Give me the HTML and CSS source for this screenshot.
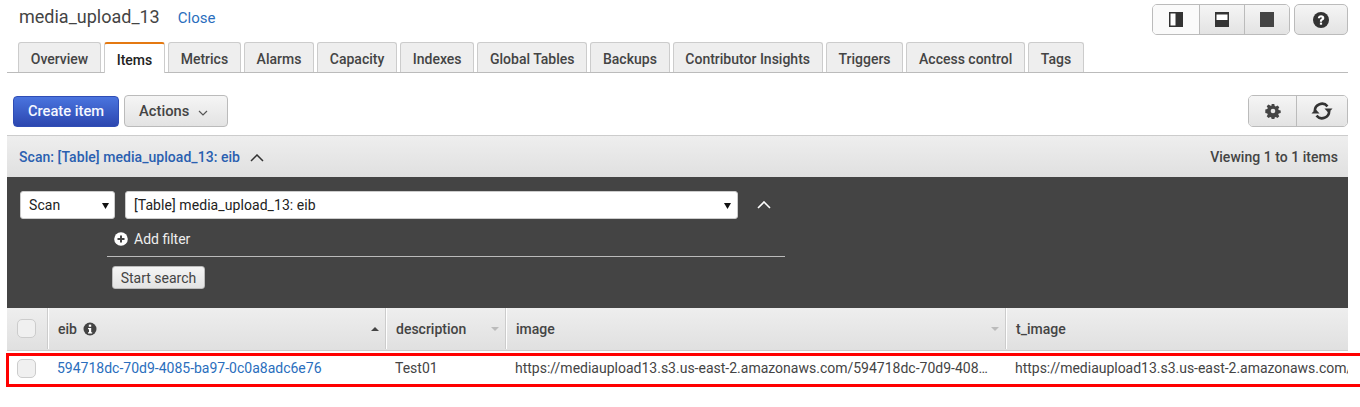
FILE: index.html
```html
<!DOCTYPE html>
<html lang="en">
<head>
<meta charset="utf-8">
<title>media_upload_13</title>
<link rel="stylesheet" href="styles.css">
</head>
<body>
<div class="page">
  <header class="title-row">
    <div class="title-left">
      <h1 class="title">media_upload_13</h1>
      <a class="close-link">Close</a>
    </div>
    <div class="view-tools">
      <div class="btn-group">
        <button class="tool tool-view is-active"><svg width="14" height="15" viewBox="0 0 14 15"><rect width="14" height="15" fill="#333"/><rect x="1.500" y="1.500" width="5" height="12" fill="#fff"/></svg></button>
        <button class="tool tool-view"><svg width="14" height="15" viewBox="0 0 14 15"><rect width="14" height="15" fill="#333"/><rect x="1.500" y="2.500" width="11" height="5.500" fill="#fff"/></svg></button>
        <button class="tool tool-view"><svg width="14" height="15" viewBox="0 0 14 15"><rect width="14" height="15" fill="#444"/></svg></button>
      </div>
      <button class="tool tool-help"><svg width="16" height="16" viewBox="0 0 16 16"><circle cx="8" cy="8" r="8" fill="#333"/><path d="M4.800 6.200C4.900 4.300 6.300 3.300 8.100 3.300c1.900 0 3.200 1.100 3.200 2.700 0 1.200-.7 1.800-1.500 2.300-.6.400-.8.700-.8 1.200v.2H6.900V9.200c0-1.100.4-1.600 1.100-2.100.6-.4.900-.6.900-1.100 0-.5-.4-.8-.9-.8-.6 0-1 .4-1.100 1z" fill="#fff"/><rect x="6.900" y="10.600" width="2.200" height="2.100" fill="#fff"/></svg></button>
    </div>
  </header>

  <nav class="tabs">
    <a class="tab">Overview</a>
    <a class="tab is-current">Items</a>
    <a class="tab">Metrics</a>
    <a class="tab">Alarms</a>
    <a class="tab">Capacity</a>
    <a class="tab">Indexes</a>
    <a class="tab">Global Tables</a>
    <a class="tab">Backups</a>
    <a class="tab">Contributor Insights</a>
    <a class="tab">Triggers</a>
    <a class="tab">Access control</a>
    <a class="tab">Tags</a>
  </nav>

  <div class="action-row">
    <div class="action-left">
      <button class="btn btn-primary">Create item</button>
      <button class="btn btn-default">Actions <svg class="caret-down" width="10" height="6" viewBox="0 0 10 6"><path d="M1 1l4 4 4-4" fill="none" stroke="#555" stroke-width="1.200"/></svg></button>
    </div>
    <div class="btn-group">
      <button class="tool tool-gear"><svg width="16" height="16" viewBox="0 0 16 16"><path fill="#444" d="M6.700 1h2.600l.4 2 1.100.5 1.700-1.100 1.800 1.800-1.100 1.700.5 1.100 2 .4v2.600l-2 .4-.5 1.100 1.100 1.700-1.800 1.800-1.700-1.100-1.100.5-.4 2H6.700l-.4-2-1.100-.5-1.700 1.100-1.800-1.800 1.100-1.700-.5-1.100-2-.4V6.400l2-.4.5-1.100-1.100-1.700 1.800-1.800 1.700 1.100L6.300 3z"/><circle cx="8" cy="8" r="2.300" fill="#e8e8e8"/></svg></button>
      <button class="tool tool-refresh"><svg width="22" height="20" viewBox="0 0 22 20"><path d="M3.800 10A7.200 7.200 0 0 1 16.500 5.300" fill="none" stroke="#333" stroke-width="2.600"/><path d="M18.200 10A7.200 7.200 0 0 1 5.500 14.700" fill="none" stroke="#333" stroke-width="2.600"/><path d="M13.500 7.500h8L17.500 12z" fill="#333"/><path d="M.5 12.500h8L4.500 8z" fill="#333"/></svg></button>
    </div>
  </div>

  <section class="scan-bar">
    <div class="scan-title">
      <span class="scan-label">Scan: [Table] media_upload_13: eib</span>
      <svg class="scan-chevron" width="14" height="8" viewBox="0 0 14 8"><path d="M1 7l6-6 6 6" fill="none" stroke="#333" stroke-width="1.500"/></svg>
    </div>
    <span class="scan-count">Viewing 1 to 1 items</span>
  </section>

  <section class="query-panel">
    <div class="query-selects">
      <select class="field field-mode"><option>Scan</option></select>
      <select class="field field-table"><option>[Table] media_upload_13: eib</option></select>
      <svg class="panel-chevron" width="14" height="8" viewBox="0 0 14 8"><path d="M1 7l6-6 6 6" fill="none" stroke="#fff" stroke-width="1.600"/></svg>
    </div>
    <div class="query-filter">
      <a class="add-filter"><svg width="14" height="14" viewBox="0 0 14 14"><circle cx="7" cy="7" r="6.800" fill="#fff"/><path d="M7 3.500v7M3.500 7h7" stroke="#444" stroke-width="2"/></svg>Add filter</a>
      <button class="start-search">Start search</button>
    </div>
  </section>

  <div class="results">
    <table class="grid">
      <colgroup>
        <col class="col-check"><col class="col-eib"><col class="col-desc"><col class="col-image"><col class="col-timage">
      </colgroup>
      <thead>
        <tr>
          <th class="cell-check"><span class="checkbox"></span></th>
          <th><div class="th-inner"><span class="th-name">eib <svg class="info" width="14" height="14" viewBox="0 0 14 14"><circle cx="7" cy="7" r="6.500" fill="#444"/><rect x="5.800" y="2.600" width="2.400" height="2.200" fill="#fff"/><path d="M5 6h3.200v4.200H9.200v1.200H5v-1.200h1V7.200H5z" fill="#fff"/></svg></span><span class="sort sort-on"></span></div></th>
          <th><div class="th-inner"><span class="th-name">description</span><span class="sort"></span></div></th>
          <th><div class="th-inner"><span class="th-name">image</span><span class="sort"></span></div></th>
          <th><div class="th-inner"><span class="th-name">t_image</span></div></th>
        </tr>
      </thead>
      <tbody>
        <tr>
          <td class="cell-check"><span class="checkbox"></span></td>
          <td><a class="row-link">594718dc-70d9-4085-ba97-0c0a8adc6e76</a></td>
          <td>Test01</td>
          <td class="cell-url">https://mediaupload13.s3.us-east-2.amazonaws.com/594718dc-70d9-4085-ba97-0c0a8adc6e76.jpg</td>
          <td class="cell-clip">https://mediaupload13.s3.us-east-2.amazonaws.com/resized-594718dc-70d9-4085-ba97.jpg</td>
        </tr>
      </tbody>
    </table>
    <div class="highlight"></div>
  </div>
</div>
</body>
</html>
```
FILE: styles.css
```css
* { box-sizing: border-box; }
html, body { margin: 0; height: 407px; overflow: hidden; background: #fff; }
body { font-family: Roboto, "Liberation Sans", sans-serif; font-size: 14px; color: #444; }
button { font-family: inherit; cursor: pointer; }
.page { width: 1360px; padding: 0 12px 0 7px; }

.title-row { display: flex; justify-content: space-between; height: 42px; padding: 4px 0 0 12px; }
.title-left { display: flex; align-items: baseline; gap: 18px; padding-top: 1px; }
.title { margin: 0; font-size: 18px; font-weight: 400; color: #444; line-height: 24px; }
.close-link { color: #2a6ebd; font-size: 15px; }
.view-tools { display: flex; gap: 4px; height: 31px; }

.btn-group { display: flex; border: 1px solid #bbb; border-radius: 5px; overflow: hidden; }
.tool { display: flex; align-items: center; justify-content: center; padding: 0; border: 0; border-left: 1px solid #bbb; background: linear-gradient(#f5f5f5, #e3e3e3); height: 100%; }
.tool:first-child { border-left: 0; }
.tool-view { width: 45px; }
.tool-view.is-active { width: 46px; background: #fafafa; }
.tool-help { width: 54px; border: 1px solid #bbb; border-radius: 5px; }
.tool-gear { width: 47px; }
.tool-refresh { width: 51px; }

.tabs { display: flex; gap: 3px; height: 31px; padding-left: 11px; border-bottom: 1px solid #bbb; }
.tab { height: 30px; padding: 2px 11.74px 0; display: flex; align-items: center; font-weight: 500; color: #444; background: #eee; border: 1px solid #ccc; border-bottom: 0; border-radius: 3px 3px 0 0; }
.tab.is-current { height: 31px; padding-top: 2px; color: #222; background: #fff; border-top: 2px solid #e47911; }

.action-row { display: flex; justify-content: space-between; align-items: flex-start; height: 62px; padding: 22px 0 0 6px; }
.action-row .btn-group { height: 32px; }
.action-left { display: flex; gap: 5px; align-items: center; }
.btn { font-size: 14.7px; font-weight: 500; border-radius: 4px; padding: 0; }
.btn-primary { width: 106px; height: 31px; color: #f5f7ff; background: linear-gradient(#4a74de, #2c47b0); border: 1px solid #2f4db5; }
.btn-default { width: 104px; height: 32px; color: #444; background: linear-gradient(#f5f5f5, #e3e3e3); border: 1px solid #bbb; padding-right: 5px; }
.caret-down { margin-left: 5px; }

.scan-bar { display: flex; justify-content: space-between; align-items: center; height: 42px; padding: 0 10px 0 12px; background: linear-gradient(#eee, #e0e0e0); border-top: 1px solid #ccc; font-weight: 500; }
.scan-title { display: flex; align-items: center; gap: 10px; }
.scan-label { color: #2a5fb0; letter-spacing: .05px; }
.scan-chevron { margin-top: 2px; }
.scan-count { color: #444; letter-spacing: .03px; }

.query-panel { height: 131px; background: #444; padding: 14px 0 0 13px; }
.query-selects { display: flex; align-items: center; gap: 10px; }
.field { appearance: none; height: 28px; font-family: inherit; font-size: 14px; letter-spacing: .07px; color: #222; background: #fff url("data:image/svg+xml;utf8,<svg xmlns='http://www.w3.org/2000/svg' width='7' height='6'><path d='M0 0h7L3.500 6z' fill='%23111'/></svg>") no-repeat right 5px top 11px; border: 1px solid #ccc; border-radius: 3px; padding: 0 0 0 8px; }
.field-mode { width: 95px; background-position: right 5px top 11px; }
.field-table { width: 613px; background-position: right 6px top 11px; }
.panel-chevron { margin-left: 9px; }
.query-filter { margin: 8px 0 0 87px; width: 678px; }
.add-filter { display: flex; align-items: center; gap: 6px; height: 30px; padding: 0 0 5px 7px; color: #eee; border-bottom: 1px solid #bbb; }
.start-search { display: block; margin: 9px 0 0 5px; width: 93px; height: 23px; padding: 0; font-size: 14px; color: #444; background: linear-gradient(#f5f5f5, #e3e3e3); border: 1px solid #bbb; border-radius: 3px; }

.results { position: relative; }
.grid { width: 1341px; table-layout: fixed; border-collapse: collapse; }
.col-check { width: 40px; }
.col-eib { width: 338px; }
.col-desc { width: 120px; }
.col-image { width: 500px; }
.col-timage { width: 343px; }
th { height: 42px; padding: 0; text-align: left; font-weight: 500; color: #444; background: linear-gradient(#eee, #e0e0e0); border-bottom: 1px solid #ccc; }
.th-inner { display: flex; align-items: center; justify-content: space-between; height: 41px; padding: 0 6px 0 10px; border-left: 1px solid #ccc; box-shadow: inset 1px 0 #fff; }
.cell-check .checkbox { margin-left: 10px; }
.th-name { display: flex; align-items: center; gap: 6px; }
.sort { width: 0; height: 0; border-left: 4px solid transparent; border-right: 4px solid transparent; border-bottom: 4px solid #bbb; transform: rotate(180deg); }
.sort-on { border-bottom-color: #444; transform: none; }
.checkbox { display: block; width: 19px; height: 19px; background: #f0f0f0; border: 1px solid #ccc; border-radius: 5px; }
td { height: 36px; padding: 0 0 0 10px; white-space: nowrap; overflow: hidden; text-overflow: ellipsis; color: #444; }
td.cell-check { padding: 0; }
td.cell-url { padding-right: 16px; }
td.cell-clip { text-overflow: clip; letter-spacing: -.02px; }
.row-link { color: #2a6ebd; }
.highlight { position: absolute; left: -1px; top: 45px; width: 1370px; height: 34px; border: 3px solid #f00; pointer-events: none; }
```
